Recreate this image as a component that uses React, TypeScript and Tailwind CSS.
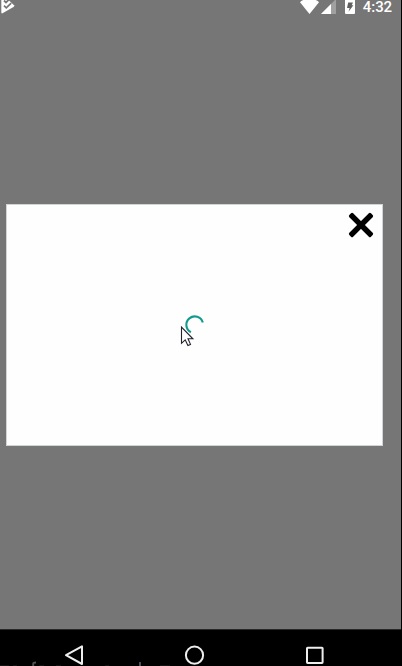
function StatusBar() {
  return (
    <header className="flex h-[15px] shrink-0 items-start text-white">
      <svg width="16" height="15" viewBox="0 0 16 15" aria-label="Notification">
        <path d="M1.3 0H8.5L14 5.3Q14.5 6.2 13.5 7L2.5 13.3Q1.3 13.7 1.3 12.3Z" fill="white" />
        <path d="M4 .5L6 2.5L9.5 -1M4 5.7L6.3 7.8L11.2 3.2" fill="none" stroke="#767676" strokeWidth="1.8" />
      </svg>
      <svg className="ml-auto" width="19" height="15" viewBox="0 0 19 15" aria-label="Wi-Fi">
        <path d="M0 2.3Q1.4 .5 4.5 -.5H14.5Q17.6 .5 19 2.3L9.5 14Z" fill="white" />
      </svg>
      <svg className="ml-[2px]" width="15" height="15" viewBox="0 0 15 15" aria-label="Mobile signal">
        <path d="M0 14L15 -1V14Z" fill="#a0a0a0" />
        <path d="M0 14L10 4V14Z" fill="white" />
      </svg>
      <svg className="ml-[9px]" width="10" height="15" viewBox="0 0 10 15" aria-label="Battery charging">
        <path d="M0 0H10V13Q10 14 9 14H1Q0 14 0 13Z" fill="white" />
        <path d="M3.2 2.4H8L6.7 5.3H8.4L3.5 11.8L4.6 8H2Z" fill="#606060" />
      </svg>
      <span className="ml-[8px] mr-[9px] whitespace-nowrap font-['Roboto',sans-serif] text-[15px] font-medium leading-[15px] tracking-[-0.1px]">4:32</span>
    </header>
  );
}

function LoadingDialog() {
  return (
    <section className="ml-[6px] mt-[189px] flex h-[242px] w-[377px] shrink-0 flex-col border border-[#d2d5d5] bg-[#fefefe]">
      <button className="mr-[8px] mt-[7px] h-[26px] w-[26px] self-end" aria-label="Close">
        <svg width="26" height="26" viewBox="0 0 26 26">
          <g transform="rotate(45 13 13)">
            <rect x="-2.3" y="10.3" width="30.6" height="5.4" rx="1.5" />
            <rect x="10.3" y="-2.3" width="5.4" height="30.6" rx="1.5" />
          </g>
        </svg>
      </button>
      <svg className="ml-[173px] mt-[76px]" width="28" height="36" viewBox="0 0 28 36" aria-label="Loading">
        <path d="M10.9 18.3A8.4 8.4 0 1 1 22.8 8.5" fill="none" stroke="#109b8d" strokeWidth="2.1" />
        <path d="M1.5 13V29.3L5.2 25.8L7.9 31.6L10.5 30.4L8 24.8H12.9Z" fill="white" stroke="#22222c" strokeWidth="1.1" strokeLinejoin="miter" />
      </svg>
    </section>
  );
}

function NavigationBar() {
  return (
    <nav className="mt-auto flex h-[37px] shrink-0 items-start overflow-hidden border-t border-[#282828] bg-black">
      <svg width="401" height="36" viewBox="0 0 401 36" aria-label="Back, Home and Recent apps">
        <g fill="none" stroke="#eeeeee" strokeWidth="2">
          <path d="M66 25.2L82 16.4V34Z" strokeLinejoin="round" />
          <circle cx="194.5" cy="25.2" r="8.6" />
          <rect x="307" y="17.7" width="15.6" height="15.2" rx=".6" />
        </g>
        <path d="M33.2 36V33.8Q33.2 32.5 36 32.5" fill="none" stroke="#505050" strokeWidth="1.9" />
        <path d="M140 32V36" stroke="#4a4e56" strokeWidth="2" />
        <path d="M0 35.7H9M13 35.7H17M39 35.7H44M56 35.7H61M105 35.7H109M160 35.7H170" stroke="#181818" />
      </svg>
    </nav>
  );
}

export default function App() {
  return (
    <main className="flex h-[666px] w-[402px] flex-col overflow-hidden border-r border-black bg-[#767676]">
      <StatusBar />
      <LoadingDialog />
      <NavigationBar />
    </main>
  );
}
